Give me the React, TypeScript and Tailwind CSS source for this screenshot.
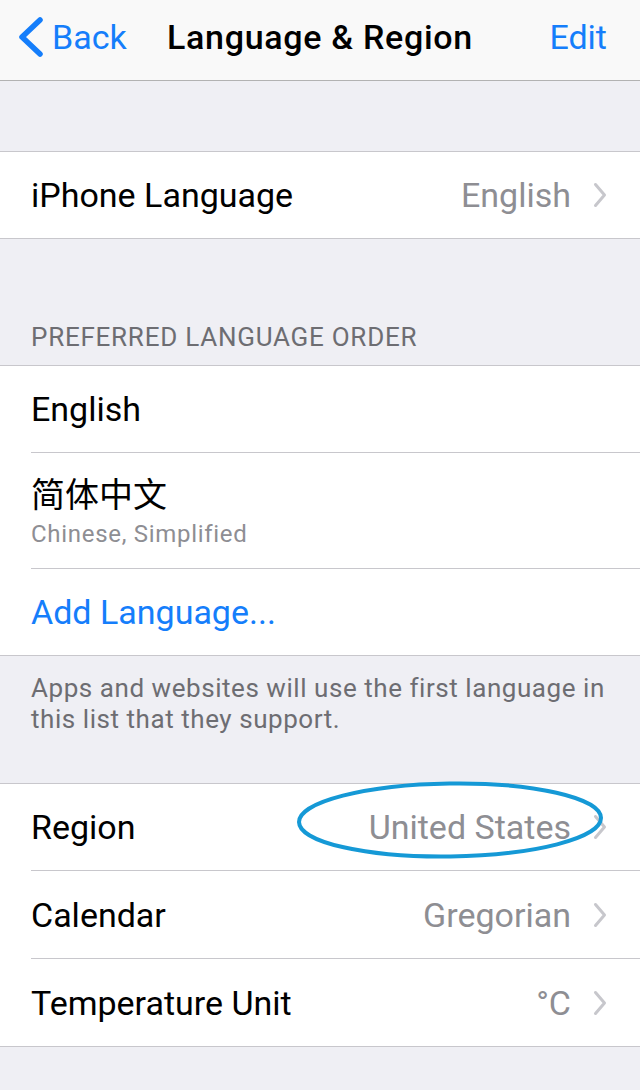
import React from "react";

const Chevron = () => (
  <svg width="14" height="26" viewBox="0 0 14 26" className="ml-[22px] shrink-0">
    <path d="M2.5 2.5 L11.5 13 L2.5 23.5" fill="none" stroke="#c7c7cc" strokeWidth="3" strokeLinecap="round" strokeLinejoin="round" />
  </svg>
);

function Row({
  label,
  value,
  last,
  h,
  children,
}: {
  label?: React.ReactNode;
  value?: string;
  last?: boolean;
  h: string;
  children?: React.ReactNode;
}) {
  return (
    <div className="bg-white pl-[31px]">
      <div
        className={`${h} flex items-center pr-[33px] ${last ? "" : "border-b border-[#c8c7cc]"}`}
      >
        {children ?? (
          <>
            <div className="flex-1 text-[34px] leading-none text-black">{label}</div>
            {value && (
              <div className="flex items-center">
                <span className="text-[34px] leading-none text-[#8e8e93]">{value}</span>
                <Chevron />
              </div>
            )}
          </>
        )}
      </div>
    </div>
  );
}

export default function App() {
  return (
    <div className="w-[640px] min-h-[1090px] bg-[#efeff4] font-['Roboto','Noto_Sans_CJK_SC',sans-serif] antialiased">
      {/* Nav bar */}
      <header className="h-[81px] bg-[#f9f9f9] border-b border-[#b2b2b2] grid grid-cols-[1fr_auto_1fr] items-center pb-[6px]">
        <div className="flex items-center pl-[17px]">
          <svg width="28" height="40" viewBox="0 0 28 40" className="shrink-0">
            <path d="M23 3 L5 20 L23 37" fill="none" stroke="#157efb" strokeWidth="5.5" strokeLinecap="round" strokeLinejoin="round" />
          </svg>
          <span className="ml-[7px] text-[34px] leading-none text-[#157efb]">Back</span>
        </div>
        <div className="text-[34px] leading-none font-medium text-black tracking-[0.7px]">Language &amp; Region</div>
        <div className="flex justify-end pr-[33px]">
          <span className="text-[34px] leading-none text-[#157efb]">Edit</span>
        </div>
      </header>

      <div className="h-[70px]" />

      {/* iPhone Language */}
      <div className="border-y border-[#c8c7cc]">
        <Row label="iPhone Language" value="English" last h="h-[86px]" />
      </div>

      {/* Section header */}
      <div className="h-[126px] flex items-end pl-[31px] pb-[12px]">
        <span className="text-[26px] leading-[31px] text-[#6d6d72] tracking-[0.75px]">PREFERRED LANGUAGE ORDER</span>
      </div>

      <div className="border-y border-[#c8c7cc]">
        <Row label="English" h="h-[87px]" />
        <Row h="h-[116px]">
          <div className="flex flex-col">
            <span className="text-[34px] leading-none text-black font-['Noto_Sans_CJK_SC',sans-serif] pb-[1px]">简体中文</span>
            <span className="mt-[11px] text-[24px] leading-none text-[#8e8e93] tracking-[0.7px]">Chinese, Simplified</span>
          </div>
        </Row>
        <Row h="h-[86px]" last>
          <span className="text-[34px] leading-none text-[#157efb]">Add Language...</span>
        </Row>
      </div>

      {/* Footer */}
      <div className="h-[127px] pl-[31px] pr-[20px] pt-[17px]">
        <p className="text-[26px] leading-[31px] text-[#6d6d72] tracking-[0.55px]">
          Apps and websites will use the first language in this list that they support.
        </p>
      </div>

      <div className="border-y border-[#c8c7cc]">
        <div className="relative">
          <Row label="Region" value="United States" h="h-[87px]" />
          <svg
            width="316"
            height="86"
            viewBox="0 0 316 86"
            className="absolute left-[292px] top-[-6px] pointer-events-none"
          >
            <ellipse
              cx="158"
              cy="42"
              rx="151"
              ry="36.5"
              fill="none"
              stroke="#1599d6"
              strokeWidth="4"
              transform="rotate(-0.8 158 42)"
            />
          </svg>
        </div>
        <Row label="Calendar" value="Gregorian" h="h-[88px]" />
        <Row label="Temperature Unit" value="°C" h="h-[87px]" last />
      </div>
    </div>
  );
}
